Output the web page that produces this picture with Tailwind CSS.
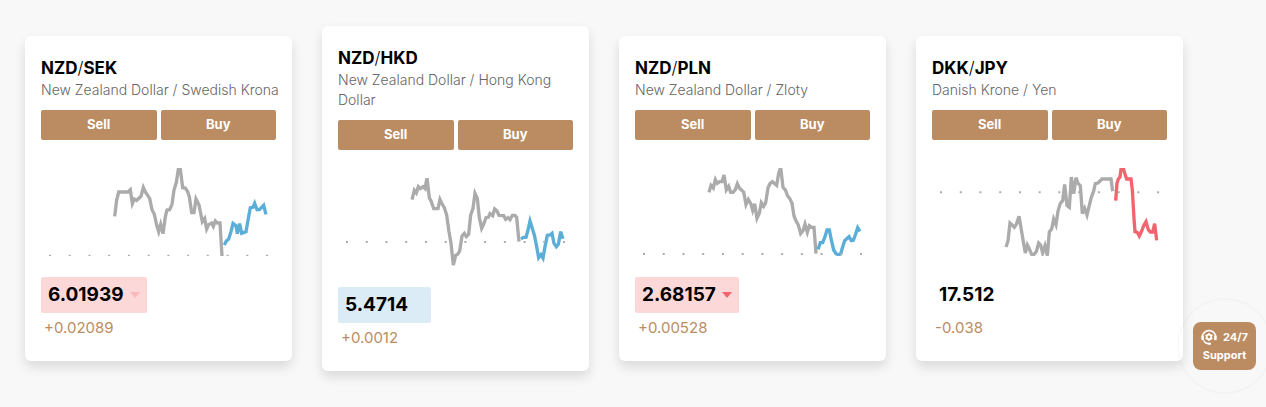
<!DOCTYPE html>
<html lang="en">
<head>
    <meta charset="UTF-8">
    <meta name="viewport" content="width=device-width, initial-scale=1.0">
    <title>Currency Rates</title>
    <script src="https://cdn.jsdelivr.net/npm/@tailwindcss/browser@4"></script>
</head>
<body class="bg-[#f8f8f8] min-h-screen font-['Inter',sans-serif] text-black">
    <main class="grid grid-cols-4 items-center gap-[30px] pt-[26px] pb-9 pl-[25px] pr-[83px]">
        <!-- NZD/SEK -->
        <article class="bg-white rounded-md px-4 py-5 shadow-[0_6px_12px_rgba(0,0,0,0.12)]">
            <h2 class="text-[17px] leading-6 font-bold">NZD<span class="font-light">/</span>SEK</h2>
            <p class="-mr-2 text-sm leading-5 font-light text-[#666]">New Zealand Dollar / Swedish Krona</p>
            <div class="grid grid-cols-2 gap-1 mt-[10px]">
                <button type="button" class="h-[30px] rounded-xs bg-[#bb8c62] text-white text-[13px] font-bold">Sell</button>
                <button type="button" class="h-[30px] rounded-xs bg-[#bb8c62] text-white text-[13px] font-bold">Buy</button>
            </div>
            <svg class="block w-full h-[88px] mt-7 mb-[21px]" viewBox="0 0 705 264" preserveAspectRatio="none" fill="none" stroke-width="10">
                <g transform="translate(177 -39)">
                    <polyline stroke="#ababab" points="44,184 50,135 56,111 84,111 91,104 97,146 103,132 110,136 123,124 130,97 137,112 149,130 156,164 163,178 170,210 176,230 182,208 189,236 196,185 201,165 209,164 216,148 222,105 229,82 235,43 241,43 248,98 256,99 262,108 268,125 275,173 282,173 288,132 297,150 307,200 314,190 320,222 326,209 335,204 340,214 346,198 352,204 360,204 366,303"/>
                    <polyline stroke="#5aaed8" points="373,270 379,258 386,252 393,230 399,205 408,212 412,236 419,206 425,235 438,230 445,190 451,158 459,157 464,145 471,164 479,163 491,151 498,178"/>
                </g>
                <path d="M24 263H705" stroke="#ababab" stroke-width="6" stroke-dasharray="6 53.2"/>
            </svg>
            <div class="flex w-fit h-9 items-center gap-[6px] px-[7px] rounded-xs bg-[#fdd8d8]">
                <span class="text-[19px] font-bold">6.01939</span>
                <svg class="w-[10px] h-[6px]" viewBox="0 0 10 6" fill="#fab9bd"><path d="M0 0h10L5 6z"/></svg>
            </div>
            <p class="mt-1 ml-[3px] text-[15px] leading-[22px] mb-[2px] text-[#bb8c62]">+0.02089</p>
        </article>

        <!-- NZD/HKD -->
        <article class="bg-white rounded-md px-4 py-5 shadow-[0_6px_12px_rgba(0,0,0,0.12)]">
            <h2 class="text-[17px] leading-6 font-bold">NZD<span class="font-light">/</span>HKD</h2>
            <p class="-mr-2 text-sm leading-5 font-light text-[#666]">New Zealand Dollar / Hong Kong Dollar</p>
            <div class="grid grid-cols-2 gap-1 mt-[10px]">
                <button type="button" class="h-[30px] rounded-xs bg-[#bb8c62] text-white text-[13px] font-bold">Sell</button>
                <button type="button" class="h-[30px] rounded-xs bg-[#bb8c62] text-white text-[13px] font-bold">Buy</button>
            </div>
            <svg class="block w-full h-[88px] mt-7 mb-[21px]" viewBox="0 0 705 264" preserveAspectRatio="none" fill="none" stroke-width="10">
                <g transform="translate(6 -39)">
                    <polyline stroke="#ababab" points="216,104 223,76 229,84 235,65 241,71 249,65 255,71 261,38 268,98 274,110 281,131 294,131 300,103 307,118 313,128 320,150 327,200 333,235 340,300 347,271 353,268 359,258 366,213 373,205 379,215 386,208 392,150 399,130 405,85 412,100 418,158 425,190 431,177 438,158 445,157 450,146 458,152 464,132 471,138 477,151 491,152 497,163 504,158 510,164 517,151 525,151 530,157 537,230"/>
                    <polyline stroke="#5aaed8" points="543,222 550,217 558,217 564,195 570,168 583,210 590,245 596,278 603,269 609,279 615,245 622,211 630,210 636,205 642,235 649,245 655,238 662,200 669,221"/>
                </g>
                <path d="M24 192H705" stroke="#ababab" stroke-width="6" stroke-dasharray="6 53.2"/>
            </svg>
            <div class="flex w-fit h-9 items-center gap-[6px] px-[7px] rounded-xs bg-[#dbecf7]">
                <span class="text-[19px] font-bold">5.4714</span>
                <span class="w-[10px]"></span>
            </div>
            <p class="mt-1 ml-[3px] text-[15px] leading-[22px] mb-[2px] text-[#bb8c62]">+0.0012</p>
        </article>

        <!-- NZD/PLN -->
        <article class="bg-white rounded-md px-4 py-5 shadow-[0_6px_12px_rgba(0,0,0,0.12)]">
            <h2 class="text-[17px] leading-6 font-bold">NZD<span class="font-light">/</span>PLN</h2>
            <p class="-mr-2 text-sm leading-5 font-light text-[#666]">New Zealand Dollar / Zloty</p>
            <div class="grid grid-cols-2 gap-1 mt-[10px]">
                <button type="button" class="h-[30px] rounded-xs bg-[#bb8c62] text-white text-[13px] font-bold">Sell</button>
                <button type="button" class="h-[30px] rounded-xs bg-[#bb8c62] text-white text-[13px] font-bold">Buy</button>
            </div>
            <svg class="block w-full h-[88px] mt-7 mb-[21px]" viewBox="0 0 705 264" preserveAspectRatio="none" fill="none" stroke-width="10">
                <g transform="translate(0 -24)">
                    <polyline stroke="#ababab" points="222,97 228,76 235,84 241,59 247,70 254,65 261,65 267,45 274,90 281,79 287,97 294,97 301,89 307,71 313,84 326,96 333,134 340,118 347,130 353,151 359,131 366,175 373,160 379,128 386,139 392,128 399,83 405,71 412,65 425,76 431,40 437,22 444,82 451,90 458,108 464,115 471,130 477,168 483,182 490,195 497,221 504,212 510,192 517,217 523,197 530,202 537,202 543,281"/>
                    <polyline stroke="#5aaed8" points="549,268 556,248 563,248 570,230 576,210 583,210 589,240 596,270 603,281 610,284 617,282 622,264 629,242 642,230 649,242 655,241 662,222 668,203 675,214"/>
                </g>
                <path d="M24 258H705" stroke="#ababab" stroke-width="6" stroke-dasharray="6 53.2"/>
            </svg>
            <div class="flex w-fit h-9 items-center gap-[6px] px-[7px] rounded-xs bg-[#fdd8d8]">
                <span class="text-[19px] font-bold">2.68157</span>
                <svg class="w-[10px] h-[6px]" viewBox="0 0 10 6" fill="#f4646e"><path d="M0 0h10L5 6z"/></svg>
            </div>
            <p class="mt-1 ml-[3px] text-[15px] leading-[22px] mb-[2px] text-[#bb8c62]">+0.00528</p>
        </article>

        <!-- DKK/JPY -->
        <article class="bg-white rounded-md px-4 py-5 shadow-[0_6px_12px_rgba(0,0,0,0.12)]">
            <h2 class="text-[17px] leading-6 font-bold">DKK<span class="font-light">/</span>JPY</h2>
            <p class="-mr-2 text-sm leading-5 font-light text-[#666]">Danish Krone / Yen</p>
            <div class="grid grid-cols-2 gap-1 mt-[10px]">
                <button type="button" class="h-[30px] rounded-xs bg-[#bb8c62] text-white text-[13px] font-bold">Sell</button>
                <button type="button" class="h-[30px] rounded-xs bg-[#bb8c62] text-white text-[13px] font-bold">Buy</button>
            </div>
            <svg class="block w-full h-[88px] mt-7 mb-[21px]" viewBox="0 0 705 264" preserveAspectRatio="none" fill="none" stroke-width="10">
                <g transform="translate(-6 -39)">
                    <polyline stroke="#ababab" points="228,276 234,258 240,204 248,211 253,217 259,208 267,184 273,218 280,260 286,294 292,270 298,282 305,298 312,298 319,290 326,264 332,270 338,294 345,272 352,302 358,231 365,222 371,192 378,209 384,168 391,145 398,137 404,88 411,152 418,157 424,66 431,116 438,68 444,85 451,92 457,176 464,160 471,180 477,155 484,127 491,108 496,86 504,84 516,72 543,72 548,109"/>
                    <polyline stroke="#f4646e" points="557,137 561,85 565,72 570,66 573,43 581,43 585,58 590,72 603,72 607,105 612,190 615,230 622,232 628,243 635,228 641,212 648,200 655,224 661,231 668,231 674,206 680,256"/>
                </g>
                <path d="M24 73H705" stroke="#ababab" stroke-width="6" stroke-dasharray="6 53.2"/>
            </svg>
            <div class="flex w-fit h-9 items-center gap-[6px] px-[7px] rounded-xs">
                <span class="text-[19px] font-bold">17.512</span>
                <span class="w-[10px]"></span>
            </div>
            <p class="mt-1 ml-[3px] text-[15px] leading-[22px] mb-[2px] text-[#bb8c62]">-0.038</p>
        </article>
    </main>

    <!-- Support widget -->
    <div class="fixed right-[10px] top-[322px] w-[63px]">
        <span class="absolute left-1/2 top-1/2 size-24 -translate-1/2 rounded-full border-2 border-black/2"></span>
        <button type="button" class="relative w-full h-12 rounded-lg bg-[#bb8c62] text-white text-[11px] leading-[18px] font-bold">
            <span class="flex items-center justify-center gap-[6px]">
                <svg class="size-4" viewBox="0 0 16 16" fill="none" stroke="#fff">
                    <path d="M2.2 11.2A6.6 6.6 0 1 1 13.8 11.2" stroke-width="1.5"/>
                    <path d="M1.6 6.5v4.6M14.4 6.5v4.6" stroke-width="2.4"/>
                    <path d="M2.6 11.5c1 2 2.8 3.2 5 3.2" stroke-width="1.5"/>
                    <path d="M7 14.7h3" stroke-width="2"/>
                    <circle cx="8" cy="8" r="2.3" stroke-width="1.8"/>
                    <path d="M8 4v1.4M8 10.6V12M4.5 6l1.2.7M10.3 9.3l1.2.7M4.5 10l1.2-.7M10.3 6.7l1.2-.7" stroke-width="1.4"/>
                </svg>
                24/7
            </span>
            Support
        </button>
    </div>
</body>
</html>
